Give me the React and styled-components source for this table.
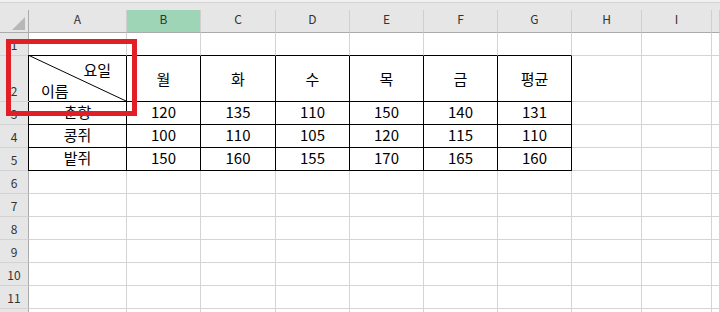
import React from "react";
import styled, { createGlobalStyle } from "styled-components";

const Global = createGlobalStyle`
  html, body { margin: 0; padding: 0; background: #fff; }
  #root { width: 720px; height: 312px; overflow: hidden; }
`;

const Page = styled.div`
  position: relative;
  width: 720px;
  height: 312px;
  overflow: hidden;
  background: #fff;
`;

const Sheet = styled.div`
  display: grid;
  grid-template-columns: 29px 98px 74px 75px 74px 74px 74px 74px 70px 70px 1fr;
  grid-template-rows: 10px 23px 23px 46px repeat(10, 23px);
`;

const Strip = styled.div`
  grid-column: 1 / -1;
  background: linear-gradient(#f1f1f1 0 2px, #d3d3d3 2px 3px, #e6e6e6 3px);
`;

const Corner = styled.div`
  box-sizing: border-box;
  background: #e6e6e6;
  border-right: 1px solid #ababab;
  border-bottom: 1px solid #ababab;
  display: flex;
  align-items: flex-end;
  justify-content: flex-end;
  padding: 0 3px 2px 0;
`;

const ColHeader = styled.div`
  box-sizing: border-box;
  background: ${(p) => (p.$selected ? "#9fd5b7" : "#e6e6e6")};
  border-right: 1px solid #cfcfcf;
  border-bottom: 1px solid #ababab;
  display: flex;
  align-items: flex-start;
  justify-content: center;
  padding-top: 1px;
  font: 12px/16px "Noto Sans CJK KR", "Noto Sans", sans-serif;
  color: #333;
`;

const RowHeader = styled.div`
  box-sizing: border-box;
  background: #e6e6e6;
  border-right: 1px solid #ababab;
  border-bottom: 1px solid #d2d2d2;
  display: flex;
  align-items: flex-end;
  justify-content: center;
  padding-bottom: 2px;
  font: 12px/16px "Noto Sans CJK KR", "Noto Sans", sans-serif;
  color: #333;
`;

const Cell = styled.div`
  box-sizing: border-box;
  background: #fff;
  border-right: 1px solid ${(p) => (p.$inTable ? "#000" : "#d4d4d4")};
  border-bottom: 1px solid ${(p) => (p.$inTable || p.$tableTop ? "#000" : "#d4d4d4")};
  box-shadow: ${(p) => (p.$leftEdge ? `-1px ${p.$firstRow ? "-1px" : "0"} 0 #000` : "none")};
  display: flex;
  align-items: ${(p) => (p.$middle ? "center" : "flex-end")};
  justify-content: center;
  padding-bottom: ${(p) => (p.$middle ? "0" : "2px")};
  font: 15px/20px "Noto Sans CJK KR", "Noto Sans", sans-serif;
  color: #000;
  white-space: nowrap;
  overflow: hidden;
`;

const DiagCell = styled(Cell)`
  position: relative;
  overflow: visible;
  flex-direction: column;
  align-items: stretch;
  justify-content: flex-end;
  padding: 0;
  line-height: 21px;
`;

const DiagLine = styled.svg`
  position: absolute;
  left: -1px;
  top: -1px;
  width: calc(100% + 1px);
  height: calc(100% + 1px);
  pointer-events: none;
`;

const DiagText = styled.span`
  position: relative;
  align-self: ${(p) => (p.$right ? "flex-end" : "flex-start")};
  padding: ${(p) => (p.$right ? "0 15px 0 0" : "0 0 0 12px")};
`;

const Highlight = styled.div`
  position: absolute;
  left: 6px;
  top: 39px;
  width: 131px;
  height: 77px;
  box-sizing: border-box;
  border: 5px solid #e21f27;
  pointer-events: none;
`;

const columns = [
  { key: "A" },
  { key: "B", selected: true },
  { key: "C" },
  { key: "D" },
  { key: "E" },
  { key: "F" },
  { key: "G" },
  { key: "H" },
  { key: "I" },
  { key: "" },
];

const tableRows = {
  2: ["diag", "월", "화", "수", "목", "금", "평균"],
  3: ["춘향", "120", "135", "110", "150", "140", "131"],
  4: ["콩쥐", "100", "110", "105", "120", "115", "110"],
  5: ["밭쥐", "150", "160", "155", "170", "165", "160"],
};

// Row 12 is only a sliver at the bottom edge; its number is not visible.
const rowNumbers = Array.from({ length: 12 }, (_, i) => i + 1);

function CornerTriangle() {
  return (
    <svg width="13" height="13" viewBox="0 0 13 13">
      <polygon points="13,0 13,13 0,13" fill="#b7b7b7" />
    </svg>
  );
}

export default function App() {
  return (
    <Page>
      <Global />
      <Sheet>
        <Strip />
        <Corner>
          <CornerTriangle />
        </Corner>
        {columns.map((c, i) => (
          <ColHeader key={`h${i}`} $selected={c.selected}>
            {c.key}
          </ColHeader>
        ))}
        {rowNumbers.map((r) => (
          <React.Fragment key={r}>
            <RowHeader>{r < 12 ? r : ""}</RowHeader>
            {columns.map((c, ci) => {
              const data = tableRows[r];
              const inTable = !!data && ci < 7;
              const tableTop = r === 1 && ci < 7;
              const value = inTable ? data[ci] : "";
              if (value === "diag") {
                return (
                  <DiagCell key={ci} $inTable $leftEdge $firstRow>
                    <DiagLine viewBox="0 0 100 100" preserveAspectRatio="none">
                      <line
                        x1="0"
                        y1="0"
                        x2="100"
                        y2="100"
                        stroke="#000"
                        strokeWidth="1"
                        vectorEffect="non-scaling-stroke"
                      />
                    </DiagLine>
                    <DiagText $right>요일</DiagText>
                    <DiagText>이름</DiagText>
                  </DiagCell>
                );
              }
              return (
                <Cell
                  key={ci}
                  $inTable={inTable}
                  $tableTop={tableTop}
                  $leftEdge={inTable && ci === 0}
                  $middle={r === 2}
                >
                  {value}
                </Cell>
              );
            })}
          </React.Fragment>
        ))}
      </Sheet>
      <Highlight />
    </Page>
  );
}
